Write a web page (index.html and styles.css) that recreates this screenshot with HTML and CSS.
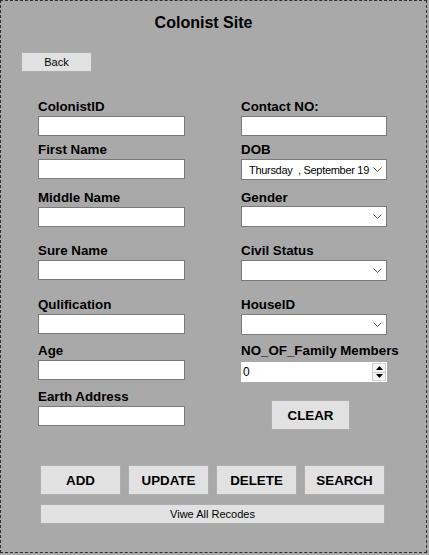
FILE: index.html
```html
<!DOCTYPE html>
<html>
<head>
<meta charset="utf-8">
<link rel="stylesheet" href="styles.css">
</head>
<body>
<div class="form">
  <h1 class="title">Colonist Site</h1>
  <button class="btn back">Back</button>
  <div class="fields">
    <div class="field"><label>ColonistID</label><div class="tb"></div></div>
    <div class="field"><label>Contact NO:</label><div class="tb"></div></div>

    <div class="field"><label>First Name</label><div class="tb"></div></div>
    <div class="field"><label>DOB</label>
      <div class="combo"><span class="dtext">Thursday  , September 19</span>
        <svg class="chev" width="9" height="5" viewBox="0 0 9 5"><path d="M0.5 0.5 L4.5 4.5 L8.5 0.5" fill="none" stroke="#555" stroke-width="1"/></svg>
      </div>
    </div>

    <div class="field"><label>Middle Name</label><div class="tb"></div></div>
    <div class="field up1"><label>Gender</label>
      <div class="combo"><span class="dtext"></span>
        <svg class="chev" width="9" height="5" viewBox="0 0 9 5"><path d="M0.5 0.5 L4.5 4.5 L8.5 0.5" fill="none" stroke="#555" stroke-width="1"/></svg>
      </div>
    </div>

    <div class="field"><label>Sure Name</label><div class="tb"></div></div>
    <div class="field"><label>Civil Status</label>
      <div class="combo"><span class="dtext"></span>
        <svg class="chev" width="9" height="5" viewBox="0 0 9 5"><path d="M0.5 0.5 L4.5 4.5 L8.5 0.5" fill="none" stroke="#555" stroke-width="1"/></svg>
      </div>
    </div>

    <div class="field"><label>Qulification</label><div class="tb"></div></div>
    <div class="field"><label>HouseID</label>
      <div class="combo"><span class="dtext"></span>
        <svg class="chev" width="9" height="5" viewBox="0 0 9 5"><path d="M0.5 0.5 L4.5 4.5 L8.5 0.5" fill="none" stroke="#555" stroke-width="1"/></svg>
      </div>
    </div>

    <div class="field"><label>Age</label><div class="tb"></div></div>
    <div class="field"><label>NO_OF_Family Members</label>
      <div class="num"><span class="numval">0</span>
        <div class="spin">
          <div class="spinbtn"><svg width="7" height="4" viewBox="0 0 7 4"><path d="M0 4 L3.5 0 L7 4 Z" fill="#000"/></svg></div>
          <div class="spinbtn"><svg width="7" height="4" viewBox="0 0 7 4"><path d="M0 0 L3.5 4 L7 0 Z" fill="#000"/></svg></div>
        </div>
      </div>
    </div>

    <div class="field"><label>Earth Address</label><div class="tb"></div></div>
    <div class="field"><button class="btn bold clear">CLEAR</button></div>
  </div>
  <div class="actions">
    <button class="btn bold act">ADD</button>
    <button class="btn bold act">UPDATE</button>
    <button class="btn bold act">DELETE</button>
    <button class="btn bold act">SEARCH</button>
  </div>
  <button class="btn viewall">Viwe All Recodes</button>
</div>
</body>
</html>
```
FILE: styles.css
```css
html, body {
  margin: 0;
  background: #a9a9a9;
}
.form {
  box-sizing: border-box;
  width: 427px;
  height: 553px;
  border: 1px dashed #2e2e2e;
  padding-top: 12px;
  font-family: "Liberation Sans", Arial, sans-serif;
  color: #000;
}
.title {
  margin: 0;
  font-size: 16px;
  line-height: 20px;
  font-weight: bold;
  text-align: center;
  padding-right: 20px;
}
.btn {
  box-sizing: border-box;
  background: #e1e1e1;
  border: 1px solid #adadad;
  padding: 0;
  color: #000;
  font-family: "Liberation Sans", Arial, sans-serif;
  font-size: 11px;
  display: block;
}
.bold {
  font-weight: bold;
  font-size: 13.33px;
}
.back {
  margin: 19px 0 0 20px;
  width: 71px;
  height: 20px;
}
.fields {
  display: grid;
  grid-template-columns: 147px 146px;
  column-gap: 56px;
  grid-template-rows: 43px 48px 53px 54px 46px 46px 41px;
  margin: 27px 0 0 37px;
}
.field {
  display: flex;
  flex-direction: column;
}
.field label {
  font-weight: bold;
  font-size: 13.33px;
  line-height: 16px;
  height: 16px;
  margin-bottom: 1px;
  white-space: nowrap;
}
.up1 label {
  margin-bottom: 0;
}
.tb {
  box-sizing: border-box;
  height: 20px;
  background: #fff;
  border: 1px solid #7a7a7a;
}
.combo {
  box-sizing: border-box;
  height: 21px;
  background: #fff;
  border: 1px solid #7a7a7a;
  display: flex;
  align-items: center;
  padding: 0 4px 0 7px;
  gap: 2px;
}
.dtext {
  flex: 1;
  overflow: hidden;
  white-space: pre;
  font-size: 11px;
  line-height: 14px;
  letter-spacing: -0.3px;
}
.chev {
  flex: none;
}
.num {
  box-sizing: border-box;
  height: 20px;
  margin-top: 2px;
  background: #fff;
  display: flex;
  align-items: center;
  padding: 0 1px 0 2px;
}
.numval {
  flex: 1;
  font-size: 12px;
  line-height: 14px;
}
.spin {
  width: 14px;
  height: 18px;
  display: flex;
  flex-direction: column;
  border: 1px solid #d0d0d0;
  box-sizing: border-box;
}
.spinbtn {
  flex: 1;
  display: flex;
  align-items: center;
  justify-content: center;
  background: #f4f4f4;
}
.spinbtn + .spinbtn {
  border-top: 1px solid #d0d0d0;
}
.clear {
  width: 79px;
  height: 30px;
  margin: 11px 0 0 30px;
}
.actions {
  display: flex;
  gap: 7px;
  margin: 35px 0 0 39px;
}
.act {
  width: 81px;
  height: 30px;
}
.viewall {
  margin: 9px 0 0 39px;
  width: 345px;
  height: 20px;
}
```
